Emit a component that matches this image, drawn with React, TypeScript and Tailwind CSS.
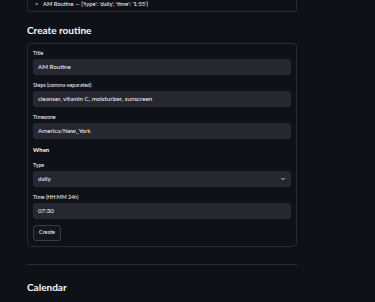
import React from "react";

function Field({ label, value }: { label: string; value: string }) {
  return (
    <div className="flex flex-col">
      <div className="h-[8px] leading-[8px] text-[5.3px] text-[#fafafa] mb-[2px]">{label}</div>
      <div className="h-[16px] rounded-[3px] bg-[#262730] flex items-center px-[5px] text-[6.2px] text-[#fafafa]">
        {value}
      </div>
    </div>
  );
}

export default function App() {
  return (
    <div
      className="w-[375px] h-[302px] overflow-hidden bg-[#0e1117] text-[#fafafa] leading-none"
      style={{ fontFamily: 'Lato, "Noto Sans", sans-serif' }}
    >
      <div className="w-[270px] ml-[27px]">
        <div className="-mt-[5px] h-[17px] rounded-b-[3px] border border-[#2a2c33] flex items-center pl-[7px] text-[5.8px]">
          <span className="mr-[4px] w-[4px]">&gt;</span>
          <span>AM Routine — {"{'type': 'daily', 'time': '1:55'}"}</span>
        </div>
        <div className="mt-[12px] h-[12px] leading-[12px] text-[10px] font-bold">Create routine</div>
        <div className="mt-[7px] rounded-[4px] border border-[#2a2c33] px-[5px] pt-[5px] pb-[5px] flex flex-col gap-[6px]">
          <Field label="Title" value="AM Routine" />
          <Field label="Steps (comma-separated)" value="cleanser, vitamin C, moisturizer, sunscreen" />
          <Field label="Timezone" value="America/New_York" />
          <div className="h-[10px] leading-[10px] text-[6px] font-bold">When</div>
          <div className="flex flex-col">
            <div className="h-[8px] leading-[8px] text-[5.3px] mb-[2px]">Type</div>
            <div className="h-[16px] rounded-[3px] bg-[#262730] flex items-center justify-between px-[5px] text-[6.2px]">
              <span>daily</span>
              <svg width="6" height="6" viewBox="0 0 24 24" fill="none" stroke="#fafafa" strokeWidth="3" strokeLinecap="round" strokeLinejoin="round">
                <path d="M6 9l6 6 6-6" />
              </svg>
            </div>
          </div>
          <Field label="Time (HH:MM 24h)" value="07:30" />
          <div className="flex">
            <div className="flex h-[16px] items-center px-[5px] rounded-[3px] border border-[#3a3c44] bg-[#13161d] text-[5.5px]">
              Create
            </div>
          </div>
        </div>
        <div className="mt-[17px] h-px bg-[#2a2c33]" />
        <div className="mt-[16px] h-[12px] leading-[12px] text-[10px] font-bold">Calendar</div>
      </div>
    </div>
  );
}
